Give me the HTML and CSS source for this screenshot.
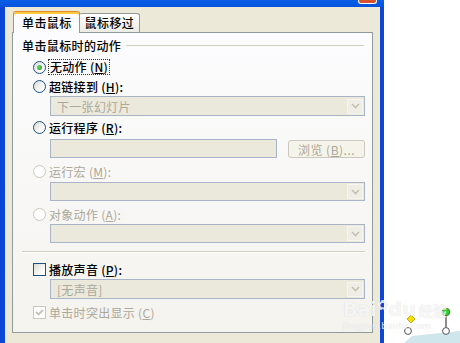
FILE: index.html
```html
<!DOCTYPE html>
<html lang="zh-CN">
<head>
    <meta charset="UTF-8">
    <meta name="viewport" content="width=device-width, initial-scale=1.0">
    <title>动作设置</title>
    <link rel="stylesheet" href="styles.css">
</head>
<body>
<div class="screen">
    <div class="window">
        <div class="titlebar"><span class="close"></span></div>
        <div class="frame">
            <div class="tabs">
                <div class="tab active">单击鼠标</div>
                <div class="tab">鼠标移过</div>
            </div>
            <div class="panel">
                <div class="group-title"><span>单击鼠标时的动作</span></div>

                <div class="opt first">
                    <span class="radio checked"></span>
                    <span class="focus">无动作 (<u>N</u>)</span>
                </div>
                <div class="opt">
                    <span class="radio"></span>
                    <span>超链接到 (<u>H</u>):</span>
                </div>
                <div class="combo tall">
                    <span class="value">下一张幻灯片</span>
                    <span class="drop"><svg width="9" height="6" viewBox="0 0 9 6"><path d="M1 1 L4.5 4.5 L8 1" fill="none" stroke="#c4c1b3" stroke-width="1.6"/></svg></span>
                </div>

                <div class="opt">
                    <span class="radio"></span>
                    <span>运行程序 (<u>R</u>):</span>
                </div>
                <div class="field-row">
                    <div class="field"></div>
                    <div class="btn">浏览 (<u>B</u>)...</div>
                </div>

                <div class="opt disabled gap5">
                    <span class="radio"></span>
                    <span>运行宏 (<u>M</u>):</span>
                </div>
                <div class="combo near3">
                    <span class="value"></span>
                    <span class="drop"><svg width="9" height="6" viewBox="0 0 9 6"><path d="M1 1 L4.5 4.5 L8 1" fill="none" stroke="#c4c1b3" stroke-width="1.6"/></svg></span>
                </div>

                <div class="opt disabled gap5">
                    <span class="radio"></span>
                    <span>对象动作 (<u>A</u>):</span>
                </div>
                <div class="combo">
                    <span class="value"></span>
                    <span class="drop"><svg width="9" height="6" viewBox="0 0 9 6"><path d="M1 1 L4.5 4.5 L8 1" fill="none" stroke="#c4c1b3" stroke-width="1.6"/></svg></span>
                </div>

                <div class="separator"></div>

                <div class="opt check-row">
                    <span class="check"></span>
                    <span>播放声音 (<u>P</u>):</span>
                </div>
                <div class="combo tall">
                    <span class="value">[无声音]</span>
                    <span class="drop"><svg width="9" height="6" viewBox="0 0 9 6"><path d="M1 1 L4.5 4.5 L8 1" fill="none" stroke="#c4c1b3" stroke-width="1.6"/></svg></span>
                </div>
                <div class="opt disabled gap5">
                    <span class="check on"><svg width="11" height="11" viewBox="0 0 11 11"><path d="M2 5 L4.5 7.5 L9 3" fill="none" stroke="#c6c3b5" stroke-width="1.8"/></svg></span>
                    <span>单击时突出显示 (<u>C</u>)</span>
                </div>
            </div>
        </div>
    </div>

    <!-- slide behind the dialog -->
    <svg class="slide" width="76" height="343" viewBox="384 0 76 343">
        <polygon points="404,343 412,336 460,331 460,343" fill="#cfe6ec"/>
        <line x1="446" y1="315" x2="446" y2="329" stroke="#444" stroke-width="1.2"/>
        <circle cx="446" cy="312" r="3.8" fill="#2bd22b" stroke="#2a6a2a" stroke-width="0.8"/>
        <polygon points="411,315 415,319 411,323 407,319" fill="#f4e000" stroke="#b89d00" stroke-width="0.8"/>
        <circle cx="408" cy="331" r="3.4" fill="#fff" stroke="#555" stroke-width="1"/>
        <circle cx="446" cy="331" r="3.4" fill="#fff" stroke="#555" stroke-width="1"/>
    </svg>

    <div class="watermark">
        <div class="wm-logo">Bai<span class="paw">&#10047;</span>du<span class="wm-cn">经验</span></div>
        <div class="wm-url">jingyan.baidu.com</div>
    </div>
</div>
</body>
</html>
```

FILE: styles.css
```css
body {
    margin: 0;
    background: #fff;
    font-family: "Noto Sans CJK SC", "DejaVu Sans", sans-serif;
    font-size: 12px;
    font-weight: 500;
    color: #000;
}
.screen {
    position: relative;
    width: 460px;
    height: 343px;
    overflow: hidden;
}
.window {
    width: 384px;
    height: 343px;
    display: flex;
    flex-direction: column;
}
.titlebar {
    height: 7px;
    background: linear-gradient(#0a5fe6, #0553dc);
    display: flex;
    justify-content: flex-end;
    padding-right: 7px;
}
.close {
    width: 17px;
    height: 3px;
    background: #d8522e;
    border: 1px solid #fff;
    border-top: none;
    border-radius: 0 0 3px 3px;
}
.frame {
    flex: 1;
    background: #ece9d8;
    border-left: 5px solid #0b46d6;
    border-right: 4px solid #0b46d6;
    padding: 4px 7px 0 7px;
}
.tabs {
    display: flex;
    align-items: flex-end;
    height: 21px;
    position: relative;
    z-index: 1;
    letter-spacing: 0.4px;
}
.tab {
    height: 18px;
    line-height: 18px;
    padding: 0 5px 0 6px;
    border: 1px solid #919b9c;
    border-bottom: none;
    border-radius: 3px 3px 0 0;
    background: linear-gradient(#fff, #ecebe5);
}
.tab.active {
    height: 21px;
    line-height: 22px;
    margin-left: 1px;
    margin-bottom: -1px;
    margin-right: -1px;
    padding: 0 7px 0 8px;
    background: #fcfcfe;
    border-top: 1px solid #e68b2c;
    box-shadow: inset 0 2px 0 #ffc83c;
    z-index: 2;
}
.tab + .tab {
    border-left: none;
}
.panel {
    height: 301px;
    box-sizing: border-box;
    border: 1px solid #919b9c;
    background: linear-gradient(#fcfcfe, #f4f3ee);
    padding: 0 7px 0 9px;
}
.group-title {
    margin-top: 4px;
    height: 16px;
    display: flex;
    align-items: center;
    gap: 5px;
    padding-right: 1px;
    letter-spacing: 0.4px;
}
.group-title::after {
    content: "";
    flex: 1;
    height: 1px;
    background: #d0d0bf;
}
.opt {
    height: 16px;
    margin-top: 3px;
    margin-left: 11px;
    display: flex;
    align-items: center;
    gap: 3px;
    white-space: nowrap;
    letter-spacing: 0.3px;
}
.opt.first {
    margin-top: 6px;
}
.opt.gap5 {
    margin-top: 5px;
}
.opt.check-row {
    margin-top: 8px;
}
.opt.disabled {
    color: #aca899;
    font-weight: 400;
}
.focus {
    outline: 1px dotted #333;
    padding: 0 1px;
    line-height: 14px;
}
.radio {
    width: 11px;
    height: 11px;
    border: 1px solid #1c5180;
    border-radius: 50%;
    background: linear-gradient(135deg, #dcdcd5, #fff 80%);
    display: flex;
    align-items: center;
    justify-content: center;
    flex: none;
}
.radio.checked::after {
    content: "";
    width: 5px;
    height: 5px;
    border-radius: 50%;
    background: radial-gradient(circle at 35% 35%, #5fd85f, #21a121);
}
.disabled .radio {
    border-color: #cac8bb;
    background: #fff;
}
.check {
    width: 11px;
    height: 11px;
    border: 1px solid #1c5180;
    background: linear-gradient(135deg, #dcdcd5, #fff 80%);
    flex: none;
    display: flex;
}
.disabled .check {
    border-color: #cac8bb;
    background: #fff;
}
.combo,
.field {
    box-sizing: border-box;
    height: 19px;
    border: 1px solid #a9b5c6;
    background: #ebe9dc;
    display: flex;
    align-items: center;
}
.combo {
    margin: 2px 0 0 28px;
    justify-content: space-between;
}
.combo.tall {
    height: 20px;
}
.combo.near3 {
    margin-top: 3px;
}
.value {
    padding-left: 6px;
    color: #aca899;
    font-weight: 400;
    letter-spacing: 0.3px;
}
.drop {
    width: 16px;
    height: 15px;
    margin-right: 1px;
    background: #efeee6;
    border: 1px solid #f5f4ee;
    box-sizing: border-box;
    display: flex;
    align-items: center;
    justify-content: center;
}
.field-row {
    display: flex;
    margin: 4px 0 0 28px;
    gap: 11px;
}
.field {
    width: 227px;
}
.btn {
    flex: 1;
    height: 18px;
    margin-top: 1px;
    box-sizing: border-box;
    border: 1px solid #cac8bb;
    border-radius: 3px;
    background: #f5f4ea;
    color: #aca899;
    font-weight: 400;
    display: flex;
    align-items: center;
    justify-content: center;
    letter-spacing: 0.5px;
}
.separator {
    margin-top: 8px;
    height: 1px;
    border-bottom: 1px solid #fff;
    background: #d0d0bf;
}
.slide {
    position: absolute;
    left: 384px;
    top: 0;
}
.watermark {
    position: absolute;
    left: 343px;
    top: 294px;
    color: rgba(255, 255, 255, 0.8);
    text-shadow: 0 0 1px rgba(140, 140, 140, 0.35);
    font-family: "DejaVu Sans", sans-serif;
    pointer-events: none;
}
.wm-logo {
    font-size: 19px;
    font-weight: bold;
    line-height: 22px;
}
.paw {
    font-size: 14px;
    vertical-align: 6px;
}
.wm-cn {
    font-family: "Noto Sans CJK SC", sans-serif;
    font-size: 14px;
    margin-left: 3px;
}
.wm-url {
    font-size: 9px;
    line-height: 10px;
    letter-spacing: 0.3px;
}
```
